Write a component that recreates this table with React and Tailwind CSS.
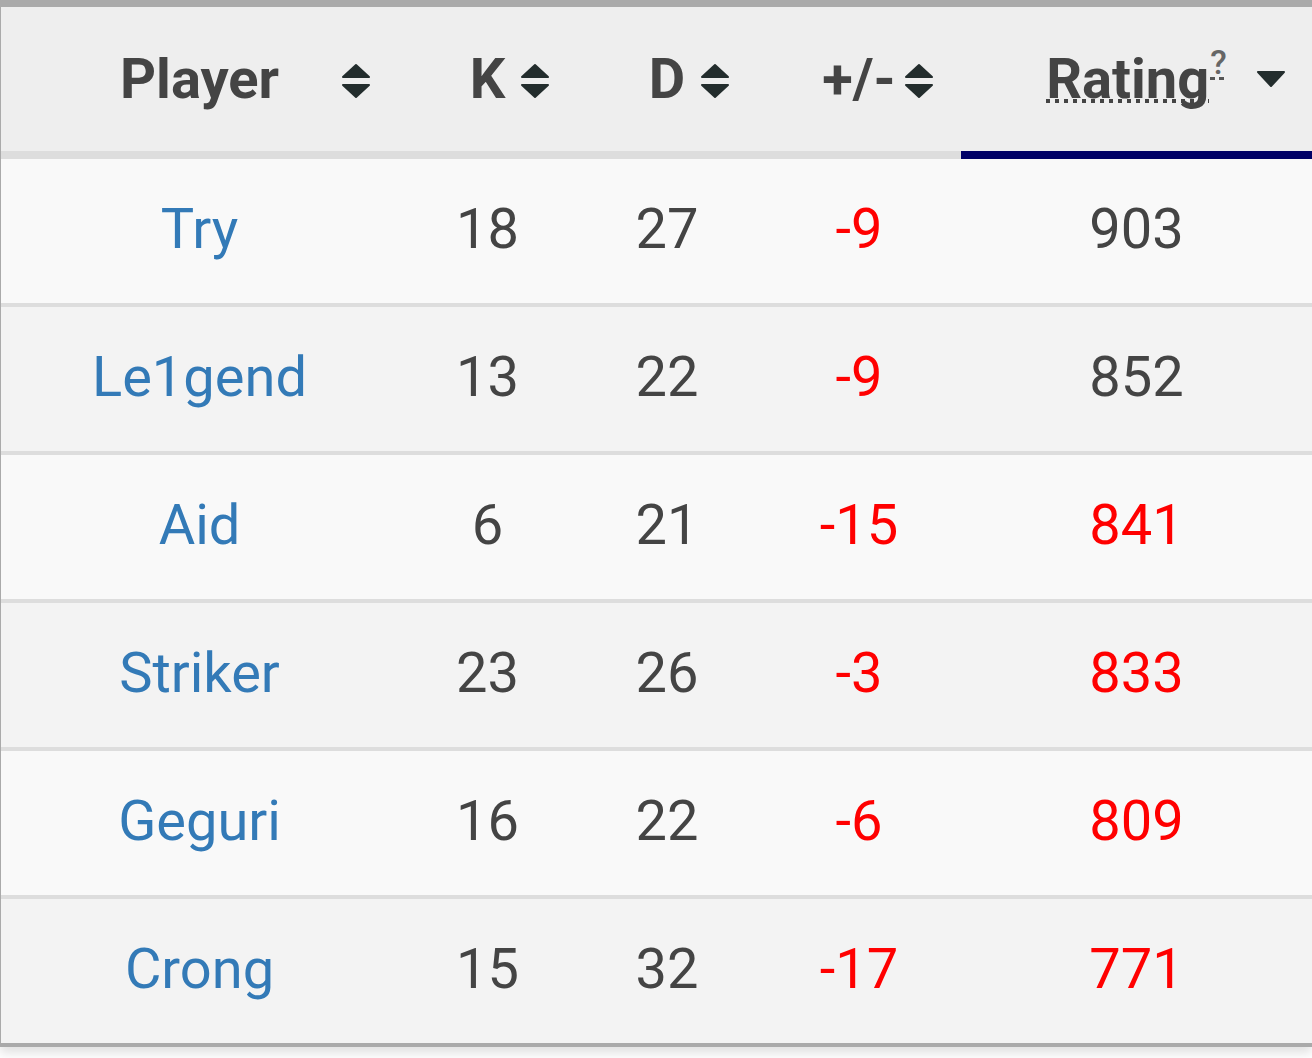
const players = [
  { name: "Try", k: 18, d: 27, diff: -9, rating: 903 },
  { name: "Le1gend", k: 13, d: 22, diff: -9, rating: 852 },
  { name: "Aid", k: 6, d: 21, diff: -15, rating: 841 },
  { name: "Striker", k: 23, d: 26, diff: -3, rating: 833 },
  { name: "Geguri", k: 16, d: 22, diff: -6, rating: 809 },
  { name: "Crong", k: 15, d: 32, diff: -17, rating: 771 },
];

const cols = "grid grid-cols-[397px_179px_180px_204px_351px]";

function SortBoth() {
  return (
    <svg width="30" height="36" viewBox="0 0 30 36" className="absolute right-[27px] top-[56px]">
      <path d="M15 2 L28 14 L2 14 Z" fill="#232d2d" stroke="#232d2d" strokeWidth="2" strokeLinejoin="round" />
      <path d="M2 22 L28 22 L15 34 Z" fill="#232d2d" stroke="#232d2d" strokeWidth="2" strokeLinejoin="round" />
    </svg>
  );
}

function SortDesc() {
  return (
    <svg width="30" height="16" viewBox="0 0 30 16" className="absolute right-[26px] top-[64px]">
      <path d="M2 1 L28 1 L15 15 Z" fill="#232d2d" stroke="#232d2d" strokeWidth="2" strokeLinejoin="round" />
    </svg>
  );
}

function HeadCell({ label }) {
  return (
    <div className="relative flex h-[152px] items-center justify-center border-b-8 border-[#dddddd]">
      <span>{label}</span>
      <SortBoth />
    </div>
  );
}

export default function App() {
  return (
    <div className="min-h-screen bg-white font-['Roboto',sans-serif]">
      <div className="border-t-[7px] border-l border-b-4 border-[#aaaaaa] shadow-[0_6px_10px_rgba(0,0,0,0.12)]">
        {/* header */}
        <div className={`${cols} bg-[#eeeeee] text-[56px] font-bold text-[#444444]`}>
          <HeadCell label="Player" />
          <HeadCell label="K" />
          <HeadCell label="D" />
          <HeadCell label="+/-" />
          <div className="relative flex h-[152px] items-center justify-center border-b-8 border-[#000066]">
            <span>
              {/* abbr style dotted underline */}
              <span className="bg-[linear-gradient(to_right,#444444_50%,transparent_50%)] bg-[length:9px_4px] bg-[position:0_53px] bg-repeat-x">
                Rating
              </span>
              <span className="relative -top-[24px] ml-[1px] bg-[linear-gradient(to_right,#555555_55%,transparent_55%)] bg-[length:9px_3px] bg-[position:0_35px] bg-repeat-x text-[34px] font-medium text-[#666666]">
                ?
              </span>
            </span>
            <SortDesc />
          </div>
        </div>

        {/* rows */}
        {players.map((p, i) => (
          <div
            key={p.name}
            className={`${cols} box-content h-[140px] items-center pb-1 text-center text-[56px] text-[#444444] ${
              i % 2 === 0 ? "bg-[#f9f9f9]" : "bg-[#f3f3f3]"
            } ${i < players.length - 1 ? "border-b-4 border-[#dddddd]" : ""}`}
          >
            <div className="text-[#337ab7]">{p.name}</div>
            <div>{p.k}</div>
            <div>{p.d}</div>
            <div className="text-[#ff0000]">{p.diff}</div>
            <div className={p.rating < 850 ? "text-[#ff0000]" : ""}>{p.rating}</div>
          </div>
        ))}
      </div>
    </div>
  );
}
